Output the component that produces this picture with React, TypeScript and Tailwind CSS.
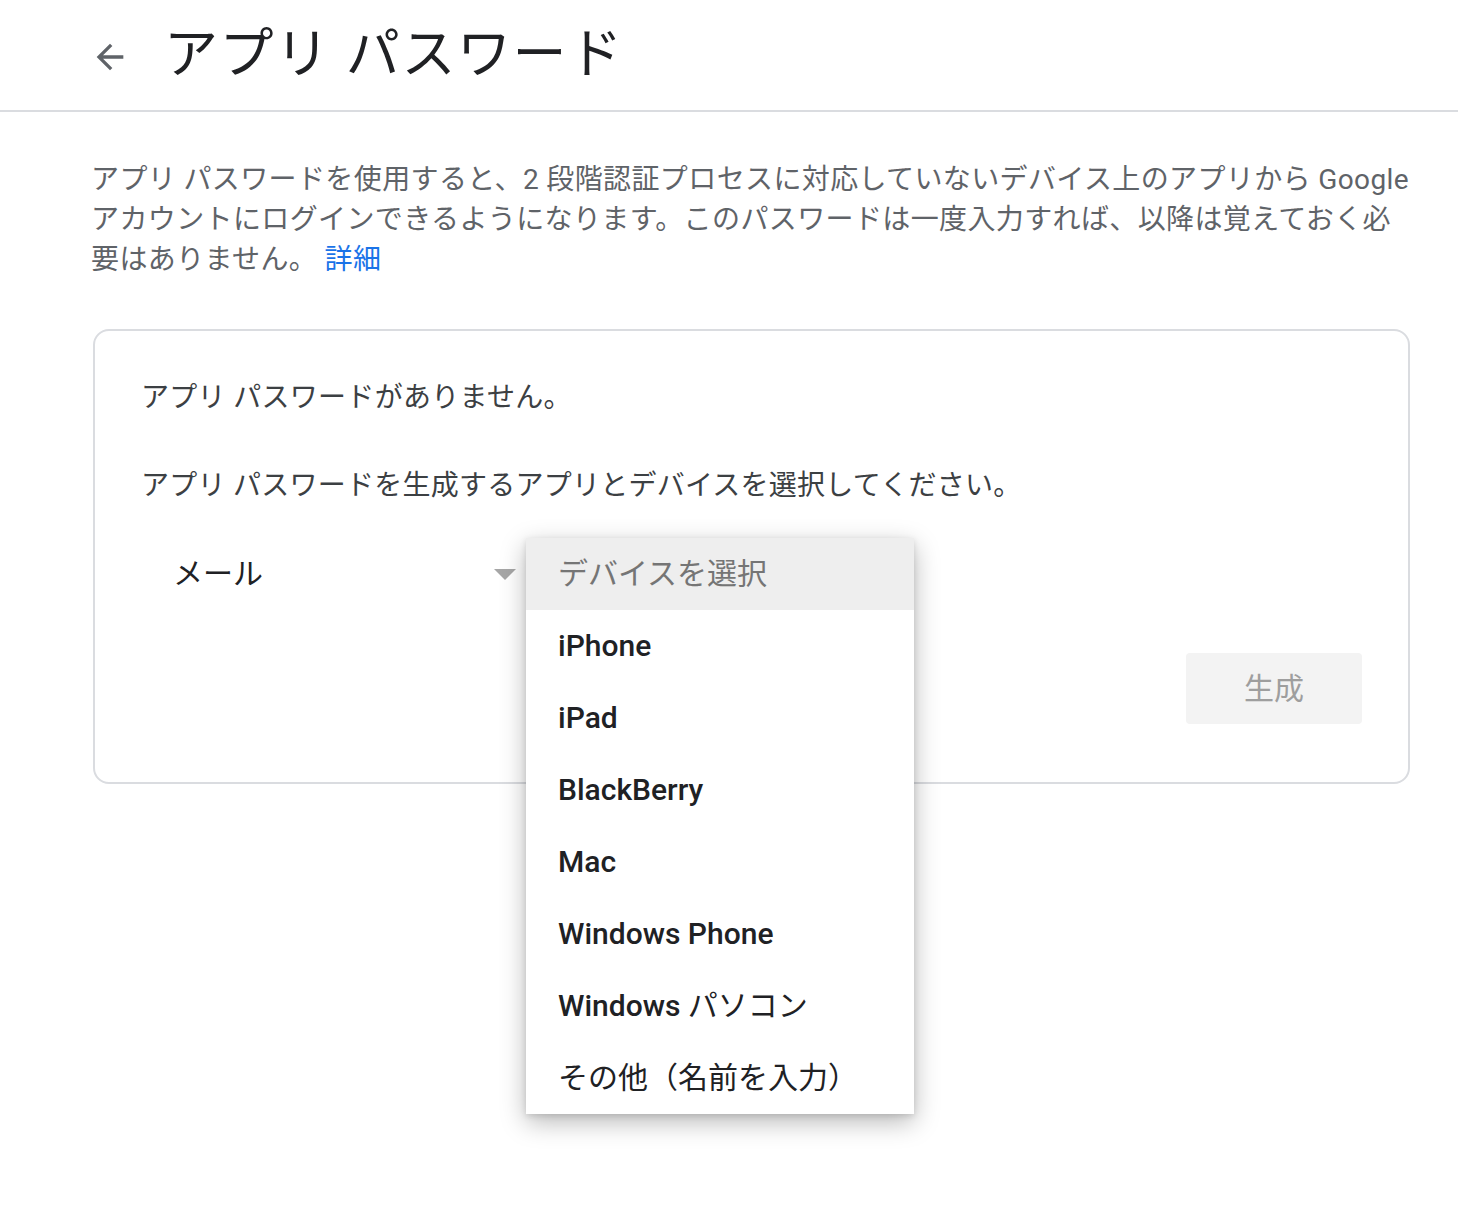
import React from "react";

const font = "font-['Roboto','Noto_Sans_CJK_JP',sans-serif]";

export default function App() {
  const items: React.ReactNode[] = [
    <span className="font-medium">iPhone</span>,
    <span className="font-medium">iPad</span>,
    <span className="font-medium">BlackBerry</span>,
    <span className="font-medium">Mac</span>,
    <span className="font-medium">Windows Phone</span>,
    <span>
      <span className="font-medium">Windows</span>
      <span className="font-normal"> パソコン</span>
    </span>,
    <span className="font-normal">その他（名前を入力）</span>,
  ];
  return (
    <div className={`${font} bg-white min-h-[1216px] w-full`}>
      <header className="h-[112px] border-b-2 border-[#dadce0] flex items-center pl-[90px]">
        <svg width="40" height="40" viewBox="0 0 24 24" className="mt-[4px]">
          <path
            d="M20 11H7.83l5.59-5.59L12 4l-8 8 8 8 1.41-1.41L7.83 13H20v-2z"
            fill="#5f6368"
          />
        </svg>
        <h1 className="ml-[34px] text-[54px] leading-none text-[#202124] font-normal tracking-[1.6px]">
          アプリ パスワード
        </h1>
      </header>

      <main className="pl-[93px] pr-[48px]">
        <p className="mt-[48px] -ml-[2px] text-[28px] leading-[40px] text-[#5f6368] tracking-[0.38px]">
          アプリ パスワードを使用すると、2 段階認証プロセスに対応していないデバイス上のアプリから Google
          アカウントにログインできるようになります。このパスワードは一度入力すれば、以降は覚えておく必要はありません。{" "}
          <span className="text-[#1a73e8]">詳細</span>
        </p>

        <section className="mt-[49px] border-2 border-[#dadce0] rounded-[16px] pt-[47px] pb-[58px] pl-[46px] pr-[46px]">
          <p className="text-[28px] leading-[40px] text-[#3c4043] tracking-[0.3px]">アプリ パスワードがありません。</p>
          <p className="mt-[48px] text-[28px] leading-[40px] text-[#3c4043] tracking-[0.25px]">
            アプリ パスワードを生成するアプリとデバイスを選択してください。
          </p>

          <div className="mt-[32px] flex items-center h-[72px]">
            <div className="w-[385px] h-full flex items-center justify-between pl-[32px] pr-[10px] pb-[2px]">
              <span className="text-[30px] text-[#202124]">メール</span>
              <svg width="22" height="11" viewBox="0 0 22 11" className="mt-[2px]">
                <path d="M0 0h22L11 11z" fill="#a6a6a6" />
              </svg>
            </div>
            <div className="relative w-[388px] h-full">
              <div className="absolute left-0 top-0 w-[388px] bg-white shadow-[0_8px_24px_rgba(0,0,0,0.28),0_2px_6px_rgba(0,0,0,0.12)] z-10">
                <div className="h-[72px] bg-[#eeeeee] flex items-center pl-[32px] pb-[2px] text-[30px] text-[#757575]">
                  デバイスを選択
                </div>
                {items.map((it, i) => (
                  <div key={i} className="h-[72px] flex items-center pl-[32px] pb-[2px] text-[30px] text-[#202124]">
                    {it}
                  </div>
                ))}
              </div>
            </div>
          </div>

          <div className="mt-[43px] flex justify-end">
            <button className="w-[176px] h-[71px] rounded-[4px] bg-[#f3f3f3] text-[30px] text-[#9e9e9e]">
              生成
            </button>
          </div>
        </section>
      </main>
    </div>
  );
}
